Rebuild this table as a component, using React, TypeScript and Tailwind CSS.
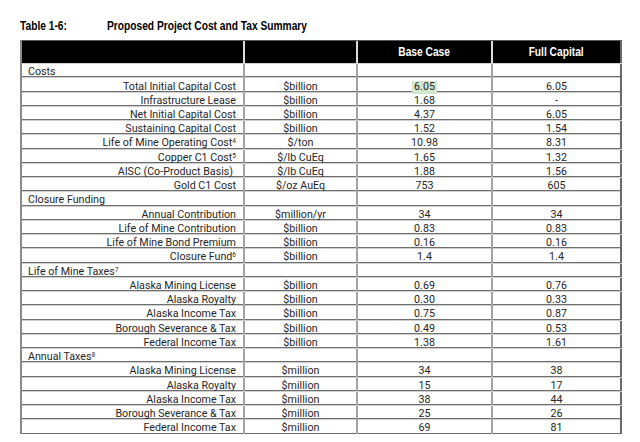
import React from "react";

type Row =
  | { s: string; sup?: string }
  | { l: string; sup?: string; u: string; b: string; f: string; hl?: boolean; pr?: boolean };

const rows: Row[] = [
  { s: "Costs" },
  { l: "Total Initial Capital Cost", u: "$billion", b: "6.05", f: "6.05", hl: true },
  { l: "Infrastructure Lease", u: "$billion", b: "1.68", f: "-" },
  { l: "Net Initial Capital Cost", u: "$billion", b: "4.37", f: "6.05" },
  { l: "Sustaining Capital Cost", u: "$billion", b: "1.52", f: "1.54" },
  { l: "Life of Mine Operating Cost", sup: "4", u: "$/ton", b: "10.98", f: "8.31" },
  { l: "Copper C1 Cost", sup: "5", u: "$/lb CuEq", b: "1.65", f: "1.32" },
  { l: "AISC (Co-Product Basis)", u: "$/lb CuEq", b: "1.88", f: "1.56", pr: true },
  { l: "Gold C1 Cost", u: "$/oz AuEq", b: "753", f: "605" },
  { s: "Closure Funding" },
  { l: "Annual Contribution", u: "$million/yr", b: "34", f: "34" },
  { l: "Life of Mine Contribution", u: "$billion", b: "0.83", f: "0.83" },
  { l: "Life of Mine Bond Premium", u: "$billion", b: "0.16", f: "0.16" },
  { l: "Closure Fund", sup: "6", u: "$billion", b: "1.4", f: "1.4" },
  { s: "Life of Mine Taxes", sup: "7" },
  { l: "Alaska Mining License", u: "$billion", b: "0.69", f: "0.76" },
  { l: "Alaska Royalty", u: "$billion", b: "0.30", f: "0.33" },
  { l: "Alaska Income Tax", u: "$billion", b: "0.75", f: "0.87" },
  { l: "Borough Severance & Tax", u: "$billion", b: "0.49", f: "0.53" },
  { l: "Federal Income Tax", u: "$billion", b: "1.38", f: "1.61" },
  { s: "Annual Taxes", sup: "8" },
  { l: "Alaska Mining License", u: "$million", b: "34", f: "38" },
  { l: "Alaska Royalty", u: "$million", b: "15", f: "17" },
  { l: "Alaska Income Tax", u: "$million", b: "38", f: "44" },
  { l: "Borough Severance & Tax", u: "$million", b: "25", f: "26" },
  { l: "Federal Income Tax", u: "$million", b: "69", f: "81" },
];

const cell = "h-full flex items-center pt-[3px] border-r-2 border-[#a3a3a3]";
const lastCell = "h-full flex items-center justify-center pt-[3px] border-r-2 border-[#6a6a6a]";

function Sup({ n }: { n?: string }) {
  if (!n) return null;
  return <span className="relative -top-[3px] text-[6.5px] leading-none">{n}</span>;
}

export default function App() {
  return (
    <div className="w-[640px] h-[442px] bg-white overflow-hidden">
      <div className="pt-[19px] pl-[20px] flex items-center h-[40px] pb-[7px] font-['Liberation_Sans',Arial,sans-serif] font-bold text-[12.3px] text-black whitespace-nowrap">
        <div className="w-[87px]">
          <span className="inline-block origin-left scale-x-[0.83]">Table 1-6:</span>
        </div>
        <span className="inline-block origin-left scale-x-[0.83]">Proposed Project Cost and Tax Summary</span>
      </div>
      <div className="ml-[20px] w-[602px] border-l-2 border-[#8a8a8a] font-['Roboto',sans-serif] text-[10.7px] text-[#262626]">
        <div className="grid grid-cols-[223px_113px_135px_129px] h-[23px] bg-black border-t border-[#555] font-['Liberation_Sans',Arial,sans-serif] font-bold text-[12.3px] text-white whitespace-nowrap">
          <div className="border-r-2 border-[#dcdcdc]" />
          <div className="border-r-2 border-[#dcdcdc]" />
          <div className="border-r-2 border-[#dcdcdc] flex items-center justify-center">
            <span className="inline-block scale-x-[0.83]">Base Case</span>
          </div>
          <div className="border-r-2 border-[#6a6a6a] flex items-center justify-center">
            <span className="inline-block scale-x-[0.83]">Full Capital</span>
          </div>
        </div>
        {rows.map((r, i) => (
          <div
            key={i}
            className="grid grid-cols-[223px_113px_135px_129px] h-[14.25px] border-b border-[#6f6f6f] border-t border-t-[#cfcfcf] leading-none whitespace-nowrap"
          >
            {"s" in r ? (
              <>
                <div className={cell + " pl-[6px]"}>
                  <span>
                    {r.s}
                    <Sup n={r.sup} />
                  </span>
                </div>
                <div className={cell} />
                <div className={cell} />
                <div className={lastCell} />
              </>
            ) : (
              <>
                <div className={cell + " justify-end " + (r.pr ? "pr-[10px]" : "pr-[7px]")}>
                  <span>
                    {r.l}
                    <Sup n={r.sup} />
                  </span>
                </div>
                <div className={cell + " justify-center"}>{r.u}</div>
                <div className={cell + " justify-center"}>
                  <span className={r.hl ? "bg-[#d3e6cf] px-[2px] py-[1px]" : ""}>{r.b}</span>
                </div>
                <div className={lastCell}>{r.f}</div>
              </>
            )}
          </div>
        ))}
      </div>
    </div>
  );
}
